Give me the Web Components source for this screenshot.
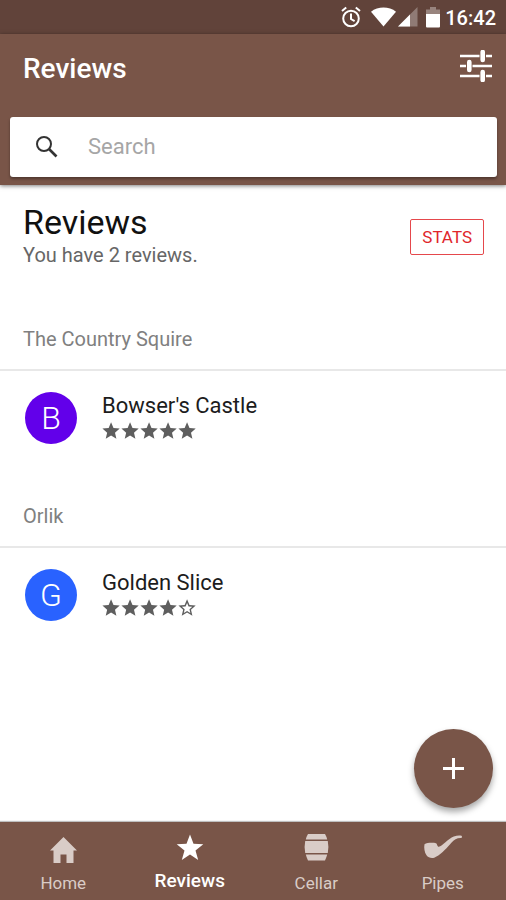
<!DOCTYPE html>
<html lang="en">
<head>
<meta charset="utf-8">
<meta name="viewport" content="width=device-width, initial-scale=1">
<title>Reviews</title>
<style>
  :root { --brand: #795548; --brand-dark: #61433a; --muted: #d9ccc7; }
  body { margin: 0; background: #fff; font-family: Roboto, "Liberation Sans", sans-serif; color: #212121; }
</style>
</head>
<body>
<reviews-app></reviews-app>
<script>
const define = (name, html, setup) => {
  const template = document.createElement('template');
  template.innerHTML = html;
  customElements.define(name, class extends HTMLElement {
    constructor() {
      super();
      this.attachShadow({ mode: 'open' }).append(template.content.cloneNode(true));
    }
    connectedCallback() { if (setup) setup(this, this.shadowRoot); }
  });
};

define('status-bar', `
  <style>
    :host { display: flex; align-items: center; justify-content: flex-end; height: 34px; padding: 0 10px; background: var(--brand-dark); color: #fff; font-size: 20px; font-weight: 500; line-height: 24px; }
    svg { display: block; }
    .alarm { margin-right: 10px; }
    .signal { margin: 0 8px 0 2px; }
    time { margin-left: 5px; padding-top: 2px; }
  </style>
  <svg class="alarm" width="20" height="22" viewBox="0 0 20 22" fill="none" stroke="#fff" stroke-width="2" role="img" aria-label="Alarm set">
    <circle cx="10" cy="12.5" r="7.8"/><path d="M10 7.5v5.500l3.600 2.200M1 5l4.200-3.600M19 5l-4.200-3.600"/>
  </svg>
  <svg width="25" height="20" viewBox="0 0 25 20" role="img" aria-label="Wi-Fi"><path d="M0 4.800C7-.8 18-.8 25 4.800L12.500 19.500z" fill="#fff"/></svg>
  <svg class="signal" width="20" height="20" viewBox="0 0 20 20" role="img" aria-label="Signal"><path d="M0 19.500L19.500 0v19.500z" fill="#fff" opacity=".3"/><path d="M0 19.500L12 7.500v12z" fill="#fff"/></svg>
  <svg width="14" height="21" viewBox="0 0 14 21" role="img" aria-label="Battery"><path d="M0 7V2.500h4V0h6v2.500h4V7z" fill="#fff" opacity=".35"/><path d="M0 7h14v12.500a1 1 0 0 1-1 1H1a1 1 0 0 1-1-1z" fill="#fff"/></svg>
  <time>16:42</time>`);

define('search-box', `
  <style>
    :host { display: block; }
    label { display: flex; align-items: center; gap: 28px; height: 60px; padding: 0 24px; background: #fff; border-radius: 3px; box-shadow: 0 2px 3px rgba(0,0,0,.35); }
    svg { flex: none; }
    input { flex: 1; min-width: 0; border: 0; outline: 0; padding: 0; background: none; font: 400 22px/28px Roboto, "Liberation Sans", sans-serif; color: #212121; }
    input::placeholder { color: #a6a6a6; opacity: 1; }
  </style>
  <label>
    <svg width="26" height="26" viewBox="0 0 26 26" fill="none" stroke="#333" aria-hidden="true"><circle cx="10" cy="10" r="7" stroke-width="2"/><path d="M15 15l7.500 7.500" stroke-width="2.600"/></svg>
    <input type="text" placeholder="Search" aria-label="Search">
  </label>`);

define('app-header', `
  <style>
    :host { display: block; position: relative; background: var(--brand); color: #fff; box-shadow: 0 1px 4px rgba(0,0,0,.5); padding: 0 9px 8px 10px; }
    .bar { display: flex; align-items: center; justify-content: space-between; height: 69px; padding: 0 5px 0 13px; margin-bottom: 14px; }
    h1 { margin: 0; font-size: 28px; line-height: 32px; font-weight: 500; }
    button { border: 0; padding: 0 0 6px; background: none; color: inherit; }
    svg { display: block; }
  </style>
  <div class="bar"><h1>Reviews</h1>
    <button type="button" aria-label="Filter">
      <svg width="32" height="32" viewBox="0 0 32 32" fill="none" stroke="#fff" aria-hidden="true"><path d="M0 6h19.500M26 6h6M0 16h6M12.500 16H32M0 26h19.500M26 26h6" stroke-width="2.600"/><path d="M22.700 2v8M9.300 12v8M22.700 22v8" stroke-width="4.600" stroke-linecap="round"/></svg>
    </button>
  </div>
  <search-box></search-box>`);

define('page-intro', `
  <style>
    :host { display: flex; align-items: center; justify-content: space-between; padding: 17px 22px 0 23px; }
    h2 { margin: 0; font-size: 34px; line-height: 40px; font-weight: 400; color: #111; }
    p { margin: 0; font-size: 20px; line-height: 26px; color: #666; }
    button { height: 36px; margin-top: 4px; padding: 0 11px; border: 1px solid #e5484c; border-radius: 2px; background: #fff; color: #e0262b; font: 400 17px/20px Roboto, "Liberation Sans", sans-serif; }
  </style>
  <div><h2><slot name="title"></slot></h2><p><slot></slot></p></div>
  <button type="button">STATS</button>`);

define('review-group', `
  <style>
    :host { display: block; }
    h3 { margin: 0; padding: 20px 23px 18px; border-bottom: 2px solid #e8e8e8; font-size: 20px; line-height: 24px; font-weight: 400; color: #808080; }
    .items { padding: 17px 25px 36px; min-height: 60px; }
  </style>
  <h3><slot name="maker"></slot></h3>
  <div class="items"><slot></slot></div>`);

const STAR = 'M12 17.270L18.180 21l-1.640-7.030L22 9.240l-7.190-.61L12 2 9.190 8.630 2 9.240l5.460 4.730L5.820 21z';
const STAR_HOLE = 'M12 15.400l-3.760 2.270 1-4.280-3.320-2.880 4.380-.38L12 6.100l1.710 4.040 4.380.38-3.320 2.880 1 4.280z';

define('star-rating', `
  <style>
    :host { display: flex; }
    svg { width: 19px; height: 20px; flex: none; }
  </style>`,
  (host, root) => {
    const value = Number(host.getAttribute('value'));
    host.setAttribute('role', 'img');
    host.setAttribute('aria-label', value + ' out of 5 stars');
    let stars = '';
    for (let i = 0; i < 5; i++) {
      stars += `<svg viewBox="1.500 1 22 22" aria-hidden="true"><path fill="#5e5e5e" fill-rule="evenodd" d="${STAR}${i < value ? '' : STAR_HOLE}"/></svg>`;
    }
    root.innerHTML += stars;
  });

define('review-item', `
  <style>
    :host { display: flex; align-items: center; gap: 25px; height: 60px; }
    .avatar { display: grid; place-items: center; width: 52px; height: 52px; border-radius: 50%; background: var(--avatar); color: #fff; font-size: 32px; line-height: 40px; font-weight: 300; }
    .text { display: grid; gap: 1px; padding-bottom: 3px; }
    .name { font-size: 22px; line-height: 28px; color: #1c1c1c; }
  </style>
  <div class="avatar"><slot name="initial"></slot></div>
  <div class="text"><div class="name"><slot></slot></div><slot name="rating"></slot></div>`);

define('nav-tab', `
  <style>
    :host { display: block; flex: 1; }
    a { display: flex; flex-direction: column; align-items: center; gap: 5px; padding: 12px 0 5px; color: var(--muted); text-decoration: none; font-size: 17px; line-height: 24px; }
    :host([active]) a { color: #fff; font-size: 19px; font-weight: 500; padding-top: 10px; }
    ::slotted(svg) { display: block; }
  </style>
  <a href="#"><slot name="icon"></slot><slot></slot></a>`,
  (host, root) => { if (host.hasAttribute('active')) root.querySelector('a').setAttribute('aria-current', 'page'); });

define('bottom-nav', `
  <style>
    :host { display: block; background: var(--brand); box-shadow: 0 -1px 1px rgba(0,0,0,.25); }
    nav { display: flex; min-height: 78px; }
  </style>
  <nav aria-label="Main">
    <nav-tab><svg slot="icon" width="32" height="32" viewBox="0 0 32 32" fill="currentColor" aria-hidden="true"><path d="M16.500 3L3 16.500h3.500V29h7v-8.500h6V29h7V16.500H30z"/></svg>Home</nav-tab>
    <nav-tab active><svg slot="icon" width="32" height="32" viewBox="0 0 32 32" fill="currentColor" aria-hidden="true"><path d="M16 2.500l3.500 9.300 9.800.4-7.800 6.200 2.700 9.600L16 22.500 7.800 28l2.700-9.600-7.800-6.200 9.800-.4z"/></svg>Reviews</nav-tab>
    <nav-tab><svg slot="icon" width="32" height="32" viewBox="0 0 32 32" fill="currentColor" aria-hidden="true"><path d="M8 0h17q1.500 2.500 2.200 5.400H5.800Q6.500 2.500 8 0zM5.200 7h22.600q1.200 6 0 12H5.200q-1.200-6 0-12zM5.800 20.600h21.400Q26.500 23.500 25 26.500H8Q6.500 23.500 5.800 20.600z"/></svg>Cellar</nav-tab>
    <nav-tab><svg slot="icon" width="40" height="32" viewBox="0 0 40 32" fill="currentColor" aria-hidden="true"><path d="M1.500 10.200C4 8.600 10 8.400 13 9.200c1.200.4 1.200 3.600 2.800 3.600 3.700-.6 9.200-8.400 15-10.400 2.900-1 5.600-1.300 7.700-.7.800.5.500 2.100-.3 2.300-4.200-.2-7 1.500-9.800 4.700C24.500 12.800 19.500 19.500 13 22.700 10.500 24.700 5.500 24.300 3.500 21.300 1.600 18.500.7 13.500 1.500 10.200z"/></svg>Pipes</nav-tab>
  </nav>`);

define('add-button', `
  <style>
    :host { display: block; }
    button { display: grid; place-items: center; width: 79px; height: 79px; padding: 0; border: 0; border-radius: 50%; background: var(--brand); box-shadow: 0 4px 6px rgba(0,0,0,.35); }
  </style>
  <button type="button" aria-label="Add review"><svg width="23" height="23" viewBox="0 0 23 23" fill="none" stroke="#fff" stroke-width="3" aria-hidden="true"><path d="M11.500 1v21M1 11.500h21"/></svg></button>`);

define('reviews-app', `
  <style>
    :host { display: flex; flex-direction: column; min-height: 100vh; position: relative; }
    main { flex: 1; }
    page-intro { margin-bottom: 39px; }
    .footer { position: sticky; bottom: 0; }
    add-button { position: absolute; right: 13px; bottom: 92px; }
  </style>
  <status-bar></status-bar>
  <app-header></app-header>
  <main>
    <page-intro><span slot="title">Reviews</span>You have 2 reviews.</page-intro>
    <review-group><span slot="maker">The Country Squire</span>
      <review-item style="--avatar:#6200ea"><span slot="initial">B</span>Bowser's Castle<star-rating slot="rating" value="5"></star-rating></review-item>
    </review-group>
    <review-group><span slot="maker">Orlik</span>
      <review-item style="--avatar:#2962ff"><span slot="initial">G</span>Golden Slice<star-rating slot="rating" value="4"></star-rating></review-item>
    </review-group>
  </main>
  <div class="footer"><add-button></add-button><bottom-nav></bottom-nav></div>`);
</script>
</body>
</html>
